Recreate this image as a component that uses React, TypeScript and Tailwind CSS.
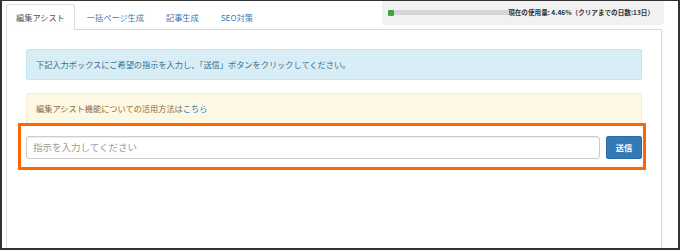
import React from "react";

const tabs = ["編集アシスト", "一括ページ生成", "記事生成", "SEO対策"];

const App = () => {
  return (
    <div
      className="w-[680px] h-[250px] overflow-hidden bg-white border-x-2 border-b-2 border-t border-[#333]"
      style={{ fontFamily: '"Noto Sans CJK JP", "Noto Sans", sans-serif' }}
    >
      <div className="ml-[4px] w-[656px] h-full flex flex-col">
        {/* tabs + usage meter */}
        <div className="flex h-[29px] border-b border-[#ddd]">
          <ul className="flex items-end gap-[2px]">
            {tabs.map((t, i) => (
              <li
                key={t}
                className={
                  i === 0
                    ? "h-[26px] -mb-px flex items-center px-[9px] rounded-t-[3px] border border-[#ddd] border-b-white bg-white text-[8.2px] text-[#555]"
                    : "h-[26px] -mb-px flex items-center px-[9px] border border-transparent text-[8.2px] text-[#337ab7]"
                }
              >
                {t}
              </li>
            ))}
          </ul>
          <div className="ml-auto -mr-[2px] -mt-px self-start w-[282px] h-[25px] flex items-center pl-[6px] pr-[10px] bg-[#f1f1f1] rounded-b-[4px]">
            <div className="w-[6px] h-[6px] rounded-[1px] bg-[#3aa83a]" />
            <div className="flex-1 h-[5px] bg-[#d6d6d6]" />
            <span className="text-[6.6px] font-bold text-[#333] whitespace-nowrap">
              現在の使用量: 4.46%（クリアまでの日数:13日）
            </span>
          </div>
        </div>

        {/* panel body */}
        <div className="flex-1 border-x border-[#ddd] shadow-[1px_0_2px_rgba(0,0,0,0.06)] px-[19px] pt-[19px]">
          <div className="h-[31px] flex items-center px-[9px] rounded-[2px] border border-[#bce8f1] bg-[#d9edf7] text-[8.2px] text-[#31708f]">
            下記入力ボックスにご希望の指示を入力し、「送信」ボタンをクリックしてください。
          </div>
          <div className="mt-[13px] h-[31px] flex items-center px-[9px] rounded-[2px] border border-[#faebcc] bg-[#fcf8e3] text-[8.2px] text-[#8a6d3b]">
            編集アシスト機能についての活用方法は
            <span className="text-[#337ab7]">こちら</span>
          </div>

          <div className="relative mt-[12px] flex gap-[6px] h-[23px]">
            <div className="flex-1 flex items-center px-[6px] rounded-[3px] border border-[#ccc] bg-white shadow-[inset_0_1px_1px_rgba(0,0,0,0.075)] text-[9.5px] text-[#999]">
              指示を入力してください
            </div>
            <div className="w-[36px] flex items-center justify-center rounded-[2px] border border-[#2e6da4] bg-[#337ab7] text-[8.2px] font-bold text-white">
              送信
            </div>
            <div className="pointer-events-none absolute -left-[8px] -right-[4px] -top-[13px] -bottom-[11px] border-[3px] border-[#ff6600]" />
          </div>
        </div>
      </div>
    </div>
  );
};

export default App;
